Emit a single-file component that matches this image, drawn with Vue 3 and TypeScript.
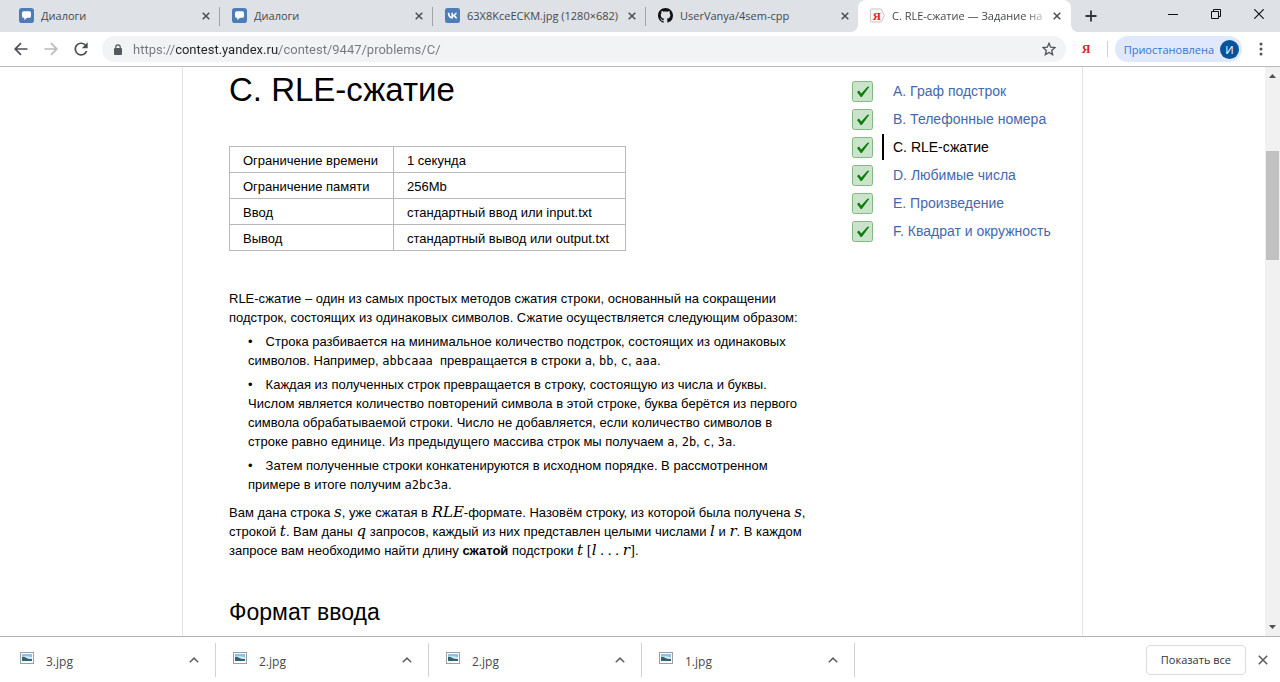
<script setup lang="ts">
import { ref } from 'vue'

interface Tab {
  title: string
  icon: 'chat' | 'vk' | 'github' | 'yandex'
}
interface Problem {
  title: string
  current?: boolean
}

const tabs: Tab[] = [
  { title: 'Диалоги', icon: 'chat' },
  { title: 'Диалоги', icon: 'chat' },
  { title: '63X8KceECKM.jpg (1280×682)', icon: 'vk' },
  { title: 'UserVanya/4sem-cpp', icon: 'github' },
  { title: 'C. RLE-сжатие — Задание на', icon: 'yandex' },
]
const activeTab = ref(4)
const url = ref('https://contest.yandex.ru/contest/9447/problems/C/')

const limits: [string, string][] = [
  ['Ограничение времени', '1 секунда'],
  ['Ограничение памяти', '256Mb'],
  ['Ввод', 'стандартный ввод или input.txt'],
  ['Вывод', 'стандартный вывод или output.txt'],
]

const problems: Problem[] = [
  { title: 'A. Граф подстрок' },
  { title: 'B. Телефонные номера' },
  { title: 'C. RLE-сжатие', current: true },
  { title: 'D. Любимые числа' },
  { title: 'E. Произведение' },
  { title: 'F. Квадрат и окружность' },
]

const downloads: string[] = ['3.jpg', '2.jpg', '2.jpg', '1.jpg']
</script>

<template>
  <div class="browser">
    <header class="tabstrip">
      <div
        v-for="(tab, i) in tabs"
        :key="i"
        class="tab"
        :class="{ active: i === activeTab, divided: i < activeTab - 1 }"
      >
        <svg v-if="tab.icon === 'chat'" class="favicon" viewBox="0 0 16 16">
          <rect width="16" height="16" rx="3" fill="#4d7db8" />
          <path d="M5 3.5h6A1.8 1.8 0 0 1 12.8 5.300v3.400A1.800 1.800 0 0 1 11 10.500H8.500L5.700 13v-2.500H5a1.800 1.800 0 0 1-1.800-1.800V5.300A1.800 1.800 0 0 1 5 3.500z" fill="#fff" />
        </svg>
        <svg v-else-if="tab.icon === 'vk'" class="favicon" viewBox="0 0 16 16">
          <rect width="16" height="16" rx="2.500" fill="#4d7db8" />
          <path d="M8.300 11.200C4.900 11.200 3 8.900 2.900 5H4.700c.1 2.900 1.300 4.100 2.200 4.300V5h1.700v2.500c1-.1 2.100-1.200 2.500-2.500h1.600c-.3 1.500-1.400 2.600-2.200 3.100.8.4 2 1.300 2.500 3.100h-1.800c-.4-1.200-1.300-2.100-2.600-2.200v2.200z" fill="#fff" />
        </svg>
        <svg v-else-if="tab.icon === 'github'" class="favicon" viewBox="0 0 16 16">
          <path fill="#111" d="M8 0C3.58 0 0 3.58 0 8c0 3.54 2.29 6.53 5.47 7.59.4.07.55-.17.55-.38 0-.19-.01-.82-.01-1.49-2.01.37-2.53-.49-2.69-.94-.09-.23-.48-.94-.82-1.13-.28-.15-.68-.52-.01-.53.63-.01 1.08.58 1.23.82.72 1.21 1.87.87 2.33.66.07-.52.28-.87.51-1.07-1.78-.2-3.64-.89-3.64-3.95 0-.87.31-1.59.82-2.15-.08-.2-.36-1.02.08-2.12 0 0 .67-.21 2.2.82.64-.18 1.32-.27 2-.27s1.36.09 2 .27c1.53-1.04 2.2-.82 2.2-.82.44 1.1.16 1.92.08 2.12.51.56.82 1.27.82 2.15 0 3.07-1.87 3.75-3.65 3.95.29.25.54.73.54 1.48 0 1.07-.01 1.93-.01 2.2 0 .21.15.46.55.38A8.01 8.01 0 0 0 16 8c0-4.42-3.58-8-8-8z" />
        </svg>
        <svg v-else class="favicon" viewBox="0 0 16 16">
          <path d="M1.500 1h9.500q1 0 1.400.9L15.300 8l-2.900 6.100q-.4.9-1.400.9H1.500q-1 0-1-1V2q0-1 1-1z" fill="#f6f6f6" stroke="#c4c4c4" />
          <text x="3" y="12.500" class="ya-mark">Я</text>
        </svg>
        <span class="tab-title">{{ tab.title }}</span>
        <button class="tab-close" aria-label="Закрыть вкладку">
          <svg width="8" height="8" viewBox="0 0 8 8"><path d="M.7.7l6.600 6.600M7.300.7L.7 7.300" stroke="#4a4d51" stroke-width="1.500" /></svg>
        </button>
      </div>
      <button class="new-tab" aria-label="Новая вкладка">
        <svg width="12" height="12" viewBox="0 0 12 12"><path d="M6 .5v11M.5 6h11" stroke="#33363a" stroke-width="1.800" /></svg>
      </button>
      <div class="window-controls">
        <button aria-label="Свернуть">
          <svg width="10" height="10" viewBox="0 0 10 10"><path d="M0 5.500h10" stroke="#111" /></svg>
        </button>
        <button aria-label="Восстановить">
          <svg width="10" height="10" viewBox="0 0 10 10"><path d="M.5 2.500h7v7h-7zM2.500 2.500v-2h7v7h-2" fill="none" stroke="#111" /></svg>
        </button>
        <button aria-label="Закрыть">
          <svg width="10" height="10" viewBox="0 0 10 10"><path d="M.3.3l9.400 9.400M9.700.3L.3 9.700" stroke="#111" stroke-width="1.200" /></svg>
        </button>
      </div>
    </header>

    <nav class="toolbar" aria-label="Навигация">
      <button class="nav-btn" aria-label="Назад">
        <svg width="14" height="14" viewBox="0 0 14 14"><path d="M13.500 7H1.500M7 1.200L1.200 7 7 12.800" fill="none" stroke="#4c4f53" stroke-width="1.700" /></svg>
      </button>
      <button class="nav-btn" aria-label="Вперёд">
        <svg width="14" height="14" viewBox="0 0 14 14"><path d="M.5 7h12M7 1.200L12.800 7 7 12.800" fill="none" stroke="#b9bbbe" stroke-width="1.700" /></svg>
      </button>
      <button class="nav-btn" aria-label="Обновить">
        <svg width="14" height="14" viewBox="0 0 14 14"><path d="M12.600 9A5.800 5.800 0 1 1 11.200 2.900L12.400 4.200" fill="none" stroke="#4c4f53" stroke-width="1.700" /><path d="M13.700.3v5.900H7.800z" fill="#4c4f53" /></svg>
      </button>
      <div class="omnibox">
        <svg width="8" height="11" viewBox="0 0 8 11"><rect y="4" width="8" height="7" rx="1" fill="#55585c" /><path d="M1.800 4.500V3a2.200 2.200 0 0 1 4.400 0v1.500" fill="none" stroke="#55585c" stroke-width="1.200" /></svg>
        <input v-model="url" class="url" type="text" aria-label="Адресная строка" spellcheck="false" />
        <button class="star" aria-label="Добавить в закладки">
          <svg width="14" height="14" viewBox="0 0 14 14"><path d="M7 1.300l1.700 3.900 4.200.4-3.200 2.800.95 4.200L7 10.400l-3.650 2.200.95-4.200L1.100 5.600l4.200-.4z" fill="none" stroke="#505357" stroke-width="1.300" /></svg>
        </button>
      </div>
      <button class="extension" aria-label="Яндекс">Я</button>
      <button class="profile">
        <span>Приостановлена</span>
        <span class="avatar">И</span>
      </button>
      <button class="menu" aria-label="Меню">
        <svg width="4" height="14" viewBox="0 0 4 14" fill="#505357"><circle cx="2" cy="2" r="1.500" /><circle cx="2" cy="7" r="1.500" /><circle cx="2" cy="12" r="1.500" /></svg>
      </button>
    </nav>

    <div class="viewport">
      <div class="page">
        <div class="sheet">
          <main class="statement">
            <h1>C. RLE-сжатие</h1>
            <table>
              <tbody>
                <tr v-for="row in limits" :key="row[0]">
                  <th scope="row">{{ row[0] }}</th>
                  <td>{{ row[1] }}</td>
                </tr>
              </tbody>
            </table>
            <p class="legend">
              RLE-сжатие – один из самых простых методов сжатия строки, основанный на сокращении<br>
              подстрок, состоящих из одинаковых символов. Сжатие осуществляется следующим образом:
            </p>
            <ul>
              <li>
                Строка разбивается на минимальное количество подстрок, состоящих из одинаковых<br>
                символов. Например, <code>abbcaaa</code>&nbsp; превращается в строки <code>a</code>, <code>bb</code>, <code>c</code>, <code>aaa</code>.
              </li>
              <li>
                Каждая из полученных строк превращается в строку, состоящую из числа и буквы.<br>
                Числом является количество повторений символа в этой строке, буква берётся из первого<br>
                символа обрабатываемой строки. Число не добавляется, если количество символов в<br>
                строке равно единице. Из предыдущего массива строк мы получаем <code>a</code>, <code>2b</code>, <code>c</code>, <code>3a</code>.
              </li>
              <li>
                Затем полученные строки конкатенируются в исходном порядке. В рассмотренном<br>
                примере в итоге получим <code>a2bc3a</code>.
              </li>
            </ul>
            <p class="task">
              Вам дана строка <i>s</i>, уже сжатая в <i>RLE</i>-формате. Назовём строку, из которой была получена <i>s</i>,<br>
              строкой <i>t</i>. Вам даны <i>q</i> запросов, каждый из них представлен целыми числами <i>l</i> и <i>r</i>. В каждом<br>
              запросе вам необходимо найти длину <b>сжатой</b> подстроки <i>t</i> <span class="math">[<i>l</i> . . . <i>r</i>]</span>.
            </p>
            <h2>Формат ввода</h2>
          </main>
          <aside>
            <ul class="problems">
              <li v-for="p in problems" :key="p.title">
                <svg class="ok" viewBox="0 0 21 21">
                  <rect x=".5" y=".5" width="20" height="20" rx="2" fill="#cbe3cb" stroke="#83b783" />
                  <path d="M5 11l2-1.400 2.300 3L15.400 5.800h2L9.800 16H8.700z" fill="#0b7f0b" />
                </svg>
                <a href="#" :class="{ current: p.current }">{{ p.title }}</a>
              </li>
            </ul>
          </aside>
        </div>
      </div>
      <div class="scrollbar" aria-hidden="true">
        <svg width="7" height="4" viewBox="0 0 7 4"><path d="M0 4L3.500 0 7 4z" fill="#505050" /></svg>
        <div class="track"><div class="thumb"></div></div>
        <svg width="7" height="4" viewBox="0 0 7 4"><path d="M0 0l3.500 4L7 0z" fill="#505050" /></svg>
      </div>
    </div>

    <footer class="downloads">
      <div v-for="(file, i) in downloads" :key="i" class="download">
        <svg class="file" width="14" height="12" viewBox="0 0 14 12">
          <rect x=".5" y=".5" width="13" height="11" fill="#fff" stroke="#9a9fa4" />
          <rect x="2" y="2" width="10" height="7" fill="#8fc1e8" />
          <path d="M2 4.500q5-1 10 1V8H2z" fill="#dceefa" />
          <path d="M2 5q2-.5 4 .8t6 1.200V9H2z" fill="#2f6471" />
        </svg>
        <span class="filename">{{ file }}</span>
        <button aria-label="Действия с файлом">
          <svg width="10" height="6" viewBox="0 0 10 6"><path d="M.8 5.300L5 1.100l4.200 4.200" fill="none" stroke="#5d6064" stroke-width="1.500" /></svg>
        </button>
      </div>
      <button class="show-all">Показать все</button>
      <button class="close-bar" aria-label="Закрыть панель загрузок">
        <svg width="10" height="10" viewBox="0 0 10 10"><path d="M.8.8l8.400 8.400M9.200.8L.8 9.200" stroke="#5d6064" stroke-width="1.600" /></svg>
      </button>
    </footer>
  </div>
</template>

<style>
body {
  margin: 0;
  overflow: hidden;
}
</style>

<style scoped>
.browser {
  display: flex;
  flex-direction: column;
  height: 100vh;
  background: #fff;
  font-family: "Open Sans", "Noto Sans", sans-serif;
  font-size: 11px;
  color: #45494d;
}
button {
  display: flex;
  align-items: center;
  justify-content: center;
  flex: none;
  margin: 0;
  padding: 0;
  border: 0;
  background: none;
  color: inherit;
  font: inherit;
}
svg {
  display: block;
  flex: none;
}

/* Tab strip */
.tabstrip {
  display: flex;
  height: 32px;
  flex: none;
  padding-left: 7px;
  background: #dee1e6;
}
.tab {
  position: relative;
  display: flex;
  align-items: center;
  flex: 0 1 213px;
  min-width: 0;
  box-sizing: border-box;
  padding: 0 10px 1px 12px;
}
.divided::after {
  content: "";
  position: absolute;
  right: 0;
  top: 7px;
  width: 1px;
  height: 19px;
  background: #a0a3a7;
}
.tab.active {
  margin-left: -1px;
  border-radius: 8px 8px 0 0;
  background: #fff;
}
.tab.active::before,
.tab.active::after {
  content: "";
  position: absolute;
  bottom: 0;
  width: 8px;
  height: 8px;
}
.tab.active::before {
  left: -8px;
  background: radial-gradient(circle at 0 0, transparent 8px, #fff 8px);
}
.tab.active::after {
  right: -8px;
  background: radial-gradient(circle at 100% 0, transparent 8px, #fff 8px);
}
.favicon {
  width: 15px;
  height: 15px;
}
.ya-mark {
  font: bold 12px "Liberation Sans Narrow", "Liberation Serif", serif;
  fill: #e01f1f;
}
.tab-title {
  flex: 1;
  min-width: 0;
  margin: 0 3px 0 7px;
  overflow: hidden;
  white-space: nowrap;
}
.active .tab-title {
  mask-image: linear-gradient(to left, transparent, #000 24px);
}
.tab-close {
  width: 8px;
  height: 16px;
}
.new-tab {
  width: 40px;
}
.window-controls {
  display: flex;
  margin-left: auto;
  height: 27px;
}
.window-controls button {
  width: 43px;
}

/* Toolbar */
.toolbar {
  display: flex;
  align-items: center;
  flex: none;
  height: 34px;
  padding-left: 6px;
  border-bottom: 1px solid #b8babc;
}
.nav-btn {
  width: 30px;
  height: 28px;
}
.omnibox {
  display: flex;
  align-items: center;
  flex: 1;
  min-width: 0;
  height: 26px;
  margin-left: 6px;
  padding: 0 10px 0 12px;
  border-radius: 13px;
  background: #f1f3f4;
}
.url {
  flex: 1;
  min-width: 0;
  margin: 0 0 0 11px;
  padding: 0;
  border: 0;
  outline: 0;
  font: 13px Roboto, "Open Sans", sans-serif;
  color: transparent;
  caret-color: #222;
  background: linear-gradient(to right, #74787c 43px, #222427 43px, #222427 146px, #74787c 146px);
  background-clip: text;
}
.star {
  width: 14px;
  height: 20px;
}
.extension {
  width: 42px;
  height: 16px;
  border-right: 1px solid #d0d3d6;
  font: bold 12px "Liberation Sans Narrow", "Liberation Serif", serif;
  color: #e01f1f;
}
.profile {
  height: 26px;
  margin-left: 7px;
  padding: 0 3px 0 9px;
  gap: 6px;
  border-radius: 13px;
  background: #dfe9fb;
  color: #3b73d1;
}
.avatar {
  width: 19px;
  border-radius: 50%;
  background: #05539b;
  color: #fff;
  line-height: 19px;
}
.menu {
  width: 38px;
  height: 26px;
}

/* Page */
.viewport {
  display: flex;
  flex: 1;
  min-height: 0;
}
.page {
  display: flex;
  justify-content: center;
  flex: 1;
  min-width: 0;
  overflow: hidden;
  font-family: "Liberation Sans", Arial, sans-serif;
  font-size: 13px;
  line-height: 19px;
  color: #000;
}
.sheet {
  display: flex;
  justify-content: space-between;
  box-sizing: border-box;
  flex: 0 1 901px;
  padding: 3px 30px 0 46px;
  border: solid #e4e4e4;
  border-width: 0 1px;
}
.statement {
  white-space: nowrap;
}
h1,
h2 {
  margin: 0;
  font-weight: normal;
}
h1 {
  font-size: 33px;
  line-height: 40px;
}
h2 {
  margin-top: 37px;
  font-size: 23px;
  line-height: 30px;
}
table {
  width: 397px;
  margin-top: 36px;
  border-collapse: collapse;
}
th,
td {
  height: 24px;
  padding: 1px 13px 0;
  border: 1px solid #b9b9b9;
  font-weight: normal;
  text-align: left;
}
th {
  width: 137px;
}
p,
ul {
  margin: 0;
  padding: 0;
  list-style: none;
}
.legend {
  margin-top: 38px;
}
.statement li {
  margin: 5px 0 0 19px;
}
.statement li::before {
  content: "•";
  display: inline-block;
  width: 14px;
}
.task {
  margin-top: 9px;
}
code {
  font-family: "DejaVu Sans Mono", monospace;
  font-size: 12px;
  line-height: 1;
}
.statement i {
  font-family: "DejaVu Serif", serif;
  font-size: 15px;
  line-height: 1;
}
.math {
  font-family: "Liberation Serif", serif;
  font-size: 15px;
  line-height: 1;
}
.problems {
  width: 200px;
  margin-top: 7px;
}
.problems li {
  display: flex;
  align-items: center;
  height: 28px;
}
.ok {
  width: 21px;
  height: 21px;
}
.problems a {
  margin-left: 9px;
  padding-left: 9px;
  border-left: 2px solid transparent;
  color: #4468ae;
  font-size: 14px;
  line-height: 26px;
  text-decoration: none;
  white-space: nowrap;
}
.problems .current {
  border-color: #000;
  color: #000;
}

/* Scrollbar */
.scrollbar {
  display: flex;
  flex-direction: column;
  align-items: center;
  width: 15px;
  flex: none;
  box-sizing: border-box;
  padding: 7px 0;
  background: #f1f1f1;
}
.track {
  flex: 1;
  width: 13px;
}
.thumb {
  height: 20%;
  margin-top: 73px;
  background: #c1c1c1;
}

/* Downloads */
.downloads {
  display: flex;
  align-items: center;
  flex: none;
  height: 45px;
  padding-left: 3px;
  border-top: 1px solid #b0b2b4;
  color: #45494d;
}
.download {
  display: flex;
  align-items: center;
  flex: 0 1 213px;
  box-sizing: border-box;
  height: 34px;
  padding: 0 11px 0 17px;
  border-right: 1px solid #d0d2d4;
  font-size: 12px;
}
.file {
  margin-bottom: 4px;
}
.filename {
  flex: 1;
  margin: 4px 0 0 12px;
}
.download button {
  width: 20px;
  height: 20px;
}
.show-all {
  height: 30px;
  margin-left: auto;
  padding: 0 14px;
  border: 1px solid #dadce0;
  border-radius: 4px;
  color: #303337;
}
.close-bar {
  width: 34px;
  height: 30px;
}
</style>
